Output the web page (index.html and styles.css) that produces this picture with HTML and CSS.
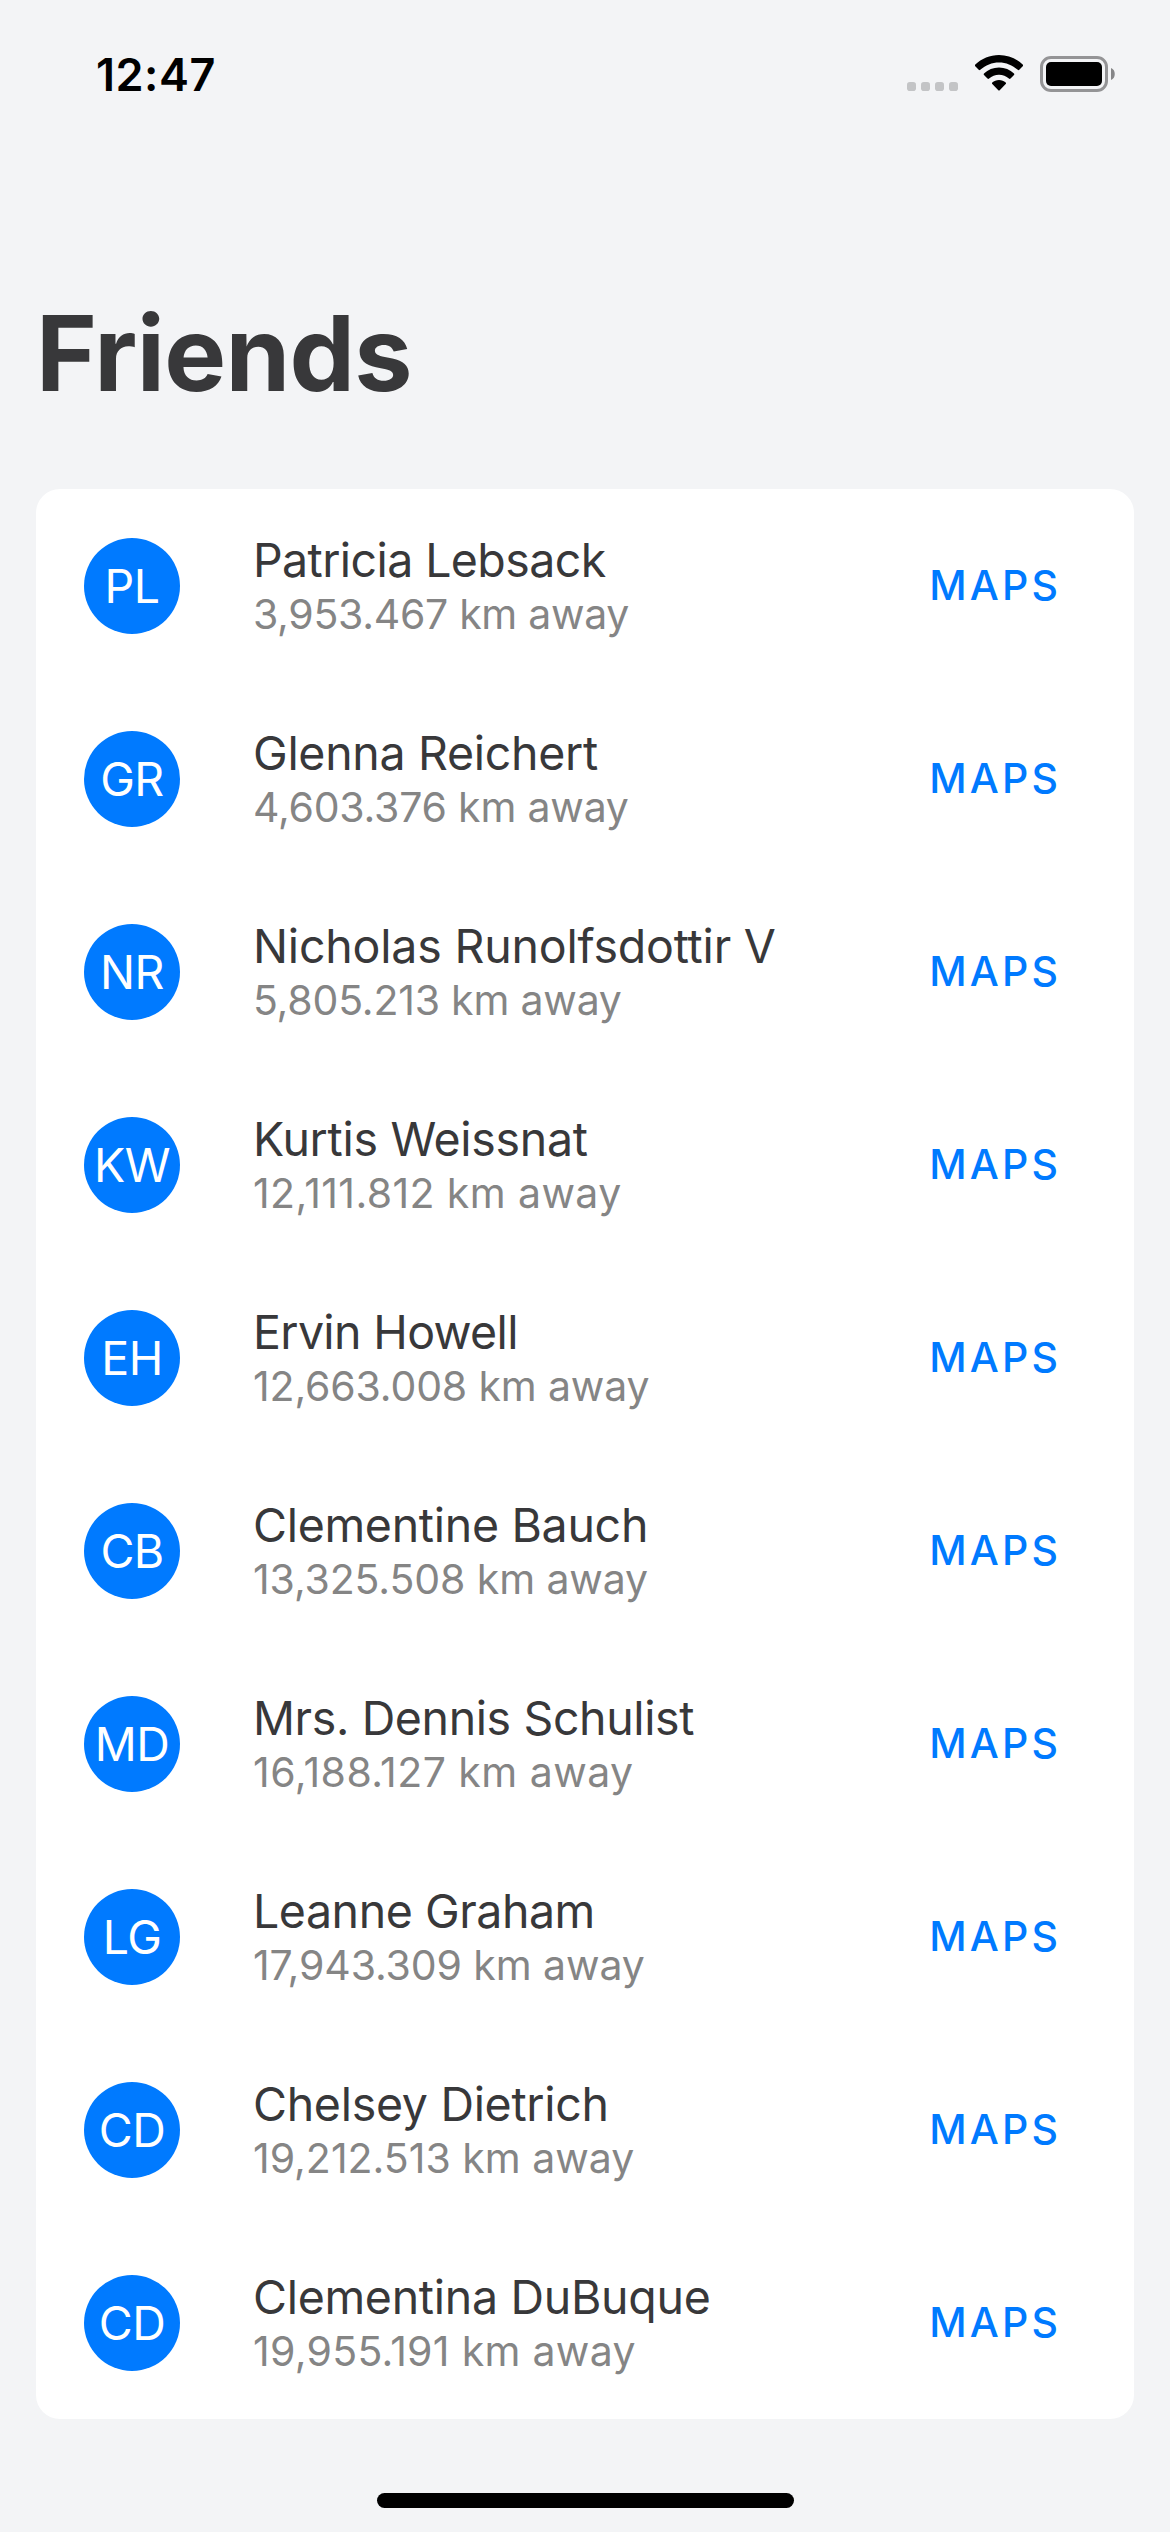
FILE: index.html
```html
<!DOCTYPE html>
<html lang="en">
<head>
<meta charset="utf-8">
<title>Friends</title>
<link rel="stylesheet" href="styles.css">
</head>
<body>
<header class="status">
  <span class="time">12:47</span>
  <div class="indicators">
    <svg class="signal" width="51" height="9" viewBox="0 0 51 9"><rect width="9" height="9" rx="2.8"/><rect x="14" width="9" height="9" rx="2.8"/><rect x="28" width="9" height="9" rx="2.8"/><rect x="42" width="9" height="9" rx="2.8"/></svg>
    <svg class="wifi" width="48" height="36" viewBox="0 0 48 36"><path d="M24 0C33 0 41.500 3.500 47.700 9.600Q48.500 10.500 47.700 11.300L44.300 14.800Q43.500 15.500 42.700 14.800C37.500 10 31 7.400 24 7.400S10.500 10 5.300 14.800Q4.500 15.500 3.700 14.800L.3 11.300Q-.5 10.500.3 9.600C6.500 3.500 15 0 24 0zM24 12.500C29.800 12.500 35 14.700 39 18.500Q39.700 19.300 39 20L35.500 23.600Q34.700 24.300 33.900 23.600C31.200 21.100 27.800 19.700 24 19.700S16.800 21.100 14.100 23.600Q13.300 24.300 12.500 23.600L9 20Q8.300 19.300 9 18.500C13 14.700 18.200 12.500 24 12.500zM24 25C26.600 25 29 25.900 30.700 27.400Q31.400 28.100 30.700 28.900L24.700 35.200Q24 35.900 23.300 35.200L17.300 28.900Q16.600 28.100 17.300 27.400C19 25.900 21.400 25 24 25z"/></svg>
    <svg class="battery" width="75" height="36" viewBox="0 0 75 36"><rect class="shell" x="1.500" y="1.500" width="65" height="33" rx="9.500"/><rect x="6" y="6" width="56" height="24" rx="5"/><path class="nub" d="M71 12C76 13.500 76 22.500 71 24z"/></svg>
  </div>
</header>
<main class="content">
  <h1 class="title">Friends</h1>
  <ul class="friends">
    <li class="friend"><span class="avatar">PL</span><div class="info"><span class="name">Patricia Lebsack</span><span class="distance">3,953.467 km away</span></div><button class="maps">MAPS</button></li>
    <li class="friend"><span class="avatar">GR</span><div class="info"><span class="name">Glenna Reichert</span><span class="distance">4,603.376 km away</span></div><button class="maps">MAPS</button></li>
    <li class="friend"><span class="avatar">NR</span><div class="info"><span class="name">Nicholas Runolfsdottir V</span><span class="distance">5,805.213 km away</span></div><button class="maps">MAPS</button></li>
    <li class="friend"><span class="avatar">KW</span><div class="info"><span class="name">Kurtis Weissnat</span><span class="distance">12,111.812 km away</span></div><button class="maps">MAPS</button></li>
    <li class="friend"><span class="avatar">EH</span><div class="info"><span class="name">Ervin Howell</span><span class="distance">12,663.008 km away</span></div><button class="maps">MAPS</button></li>
    <li class="friend"><span class="avatar">CB</span><div class="info"><span class="name">Clementine Bauch</span><span class="distance">13,325.508 km away</span></div><button class="maps">MAPS</button></li>
    <li class="friend"><span class="avatar">MD</span><div class="info"><span class="name">Mrs. Dennis Schulist</span><span class="distance">16,188.127 km away</span></div><button class="maps">MAPS</button></li>
    <li class="friend"><span class="avatar">LG</span><div class="info"><span class="name">Leanne Graham</span><span class="distance">17,943.309 km away</span></div><button class="maps">MAPS</button></li>
    <li class="friend"><span class="avatar">CD</span><div class="info"><span class="name">Chelsey Dietrich</span><span class="distance">19,212.513 km away</span></div><button class="maps">MAPS</button></li>
    <li class="friend"><span class="avatar">CD</span><div class="info"><span class="name">Clementina DuBuque</span><span class="distance">19,955.191 km away</span></div><button class="maps">MAPS</button></li>
  </ul>
</main>
<footer class="home"><div class="home-bar"></div></footer>
</body>
</html>
```
FILE: styles.css
```css
* { box-sizing: border-box; }
body {
  margin: 0;
  height: 2532px;
  display: flex;
  flex-direction: column;
  background: #f3f4f6;
  color: #38383a;
  font-family: Inter, "Liberation Sans", sans-serif;
  overflow: hidden;
}
.status {
  height: 141px;
  padding: 48px 55px 0 96px;
  display: flex;
  justify-content: space-between;
  align-items: flex-start;
  color: #000;
}
.time {
  font-size: 45px;
  font-weight: 600;
  line-height: 54px;
  letter-spacing: 0.5px;
}
.indicators {
  display: flex;
  align-items: flex-end;
  height: 44px;
}
.signal { fill: #c3c4c6; margin-bottom: 1px; }
.wifi { margin: 0 17px 1px; }
.shell { fill: none; stroke: #949496; stroke-width: 3; }
.nub { fill: #868688; }
.content { padding: 0 36px; }
.title {
  margin: 0;
  height: 348px;
  padding: 147px 0 0;
  font-size: 104px;
  font-weight: 700;
  line-height: 130px;
  letter-spacing: -0.7px;
}
.friends {
  margin: 0;
  padding: 0;
  list-style: none;
  background: #fff;
  border-radius: 24px;
}
.friend {
  --name-tracking: -0.3px;
  --distance-tracking: -0.2px;
  height: 193px;
  padding: 0 73px 0 48px;
  display: flex;
  align-items: center;
}
.friend:nth-child(1) { --name-tracking: -0.6px; --distance-tracking: -0.3px; }
.friend:nth-child(3) { --name-tracking: -0.2px; }
.friend:nth-child(4) { --distance-tracking: 0.4px; }
.friend:nth-child(5) { --name-tracking: -0.65px; --distance-tracking: -0.15px; }
.friend:nth-child(6) { --distance-tracking: -0.1px; }
.friend:nth-child(7) { --name-tracking: -0.38px; --distance-tracking: 0.47px; }
.friend:nth-child(8) { --name-tracking: -0.45px; --distance-tracking: -0.1px; }
.friend:nth-child(9) { --distance-tracking: 0; }
.friend:nth-child(10) { --distance-tracking: 0.3px; }
.avatar {
  width: 96px;
  height: 96px;
  display: flex;
  align-items: center;
  justify-content: center;
  border-radius: 50%;
  background: #007aff;
  color: #fff;
  font-size: 46.5px;
  letter-spacing: -0.6px;
}
.info {
  flex: 1;
  margin-left: 73px;
  padding-bottom: 2px;
  display: flex;
  flex-direction: column;
}
.name {
  font-size: 46.5px;
  line-height: 58px;
  letter-spacing: var(--name-tracking);
}
.distance {
  color: #858585;
  font-size: 41px;
  line-height: 50px;
  letter-spacing: var(--distance-tracking);
}
.maps {
  padding: 0 0 2px;
  border: 0;
  background: none;
  color: #007aff;
  font: 500 41px/50px Inter, "Liberation Sans", sans-serif;
  letter-spacing: 3.1px;
}
.home {
  margin-top: auto;
  padding-bottom: 24px;
  display: flex;
  justify-content: center;
}
.home-bar {
  width: 417px;
  height: 15px;
  border-radius: 8px;
  background: #000;
}
```
